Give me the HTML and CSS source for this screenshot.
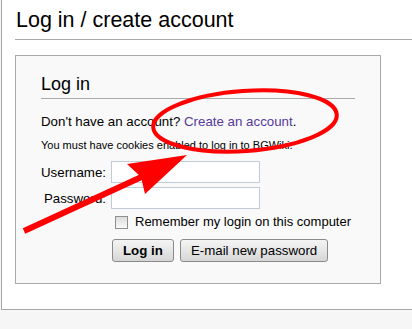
FILE: index.html
```html
<!DOCTYPE html>
<html lang="en">
<head>
    <meta charset="UTF-8">
    <title>Log in / create account - BGWiki</title>
    <link rel="stylesheet" href="styles.css">
</head>
<body>
    <div class="page">
        <div class="content">
            <h1 class="page-title">Log in / create account</h1>
            <div class="login-box">
                <h2>Log in</h2>
                <p class="signup-hint">Don't have an account? <a href="#">Create an account</a>.</p>
                <p class="cookie-note">You must have cookies enabled to log in to BGWiki.</p>
                <form class="login-form">
                    <div class="form-row">
                        <label class="field-label" for="username">Username:</label>
                        <input type="text" id="username">
                    </div>
                    <div class="form-row">
                        <label class="field-label" for="password">Password:</label>
                        <input type="password" id="password">
                    </div>
                    <div class="form-row">
                        <span></span>
                        <label class="remember"><span class="check"></span> Remember my login on this computer</label>
                    </div>
                    <div class="form-row">
                        <span></span>
                        <div class="buttons">
                            <button type="button" class="btn btn-main">Log in</button>
                            <button type="button" class="btn">E-mail new password</button>
                        </div>
                    </div>
                </form>
            </div>
        </div>

        <!-- red markup drawn over the screenshot -->
        <svg class="markup" width="412" height="329" viewBox="0 0 412 329">
            <ellipse cx="245" cy="121" rx="92" ry="30" transform="rotate(-4 245 121)" fill="none" stroke="#ff0000" stroke-width="4"/>
            <line x1="24" y1="231" x2="148" y2="174" stroke="#ff0000" stroke-width="6"/>
            <polygon points="187,155 127,164 141,177 145,194" fill="#ff0000"/>
        </svg>
    </div>
</body>
</html>
```
FILE: styles.css
```css
* {
    box-sizing: border-box;
}

body {
    margin: 0;
    background-color: #f6f6f6;
    font-family: "Liberation Sans", Arial, sans-serif;
    color: #000;
}

.page {
    position: relative;
    width: 412px;
    height: 329px;
    overflow: hidden;
}

.content {
    margin-left: 1px;
    height: 310px;
    padding: 1px 0 0 13px;
    background-color: #fff;
    border-left: 1px solid #a7a7a7;
    border-bottom: 1px solid #a7a7a7;
}

.page-title {
    margin: 0;
    padding-left: 1px;
    font-size: 21.5px;
    font-weight: normal;
    line-height: 38px;
    border-bottom: 1px solid #aaa;
}

.login-box {
    width: 366px;
    height: 229px;
    margin-top: 15px;
    padding: 14px 25px 0 25px;
    background-color: #f9f9f9;
    border: 1px solid #aaa;
}

.login-box h2 {
    margin: 0;
    font-size: 18px;
    font-weight: normal;
    line-height: 28px;
    border-bottom: 1px solid #aaa;
}

.signup-hint {
    margin: 14px 0 0;
    font-size: 13.3px;
    line-height: 18px;
}

.signup-hint a {
    color: #56389a;
    text-decoration: none;
}

.cookie-note {
    margin: 7px 0 0;
    font-size: 11px;
    line-height: 14px;
}

.login-form {
    margin-top: 9px;
}

.form-row {
    display: grid;
    grid-template-columns: 70px 1fr;
    align-items: center;
    margin-bottom: 4px;
    font-size: 13.3px;
}

.field-label {
    text-align: right;
    padding-right: 5px;
}

.form-row input {
    width: 149px;
    height: 22px;
    border: 1px solid #bfcbd6;
    background-color: #fff;
    font-size: 13px;
}

.remember {
    display: flex;
    align-items: center;
    gap: 7px;
    line-height: 18px;
    padding-left: 4px;
    font-size: 13px;
    white-space: nowrap;
}

.check {
    flex: none;
    width: 13px;
    height: 13px;
    border: 1px solid #8f8f8f;
    background: linear-gradient(#dcdcdc, #fafafa);
}

.buttons {
    display: flex;
    gap: 6px;
    margin-top: 4px;
    padding-left: 1px;
}

.btn {
    height: 23px;
    padding: 0 10px;
    font-family: "Liberation Sans", Arial, sans-serif;
    font-size: 13.3px;
    color: #000;
    border: 1px solid #8a8a8a;
    border-radius: 3px;
    background: linear-gradient(#f4f4f4, #e6e6e6 50%, #d6d6d6);
}

.btn-main {
    font-weight: bold;
}

.markup {
    position: absolute;
    left: 0;
    top: 0;
    pointer-events: none;
}
```
